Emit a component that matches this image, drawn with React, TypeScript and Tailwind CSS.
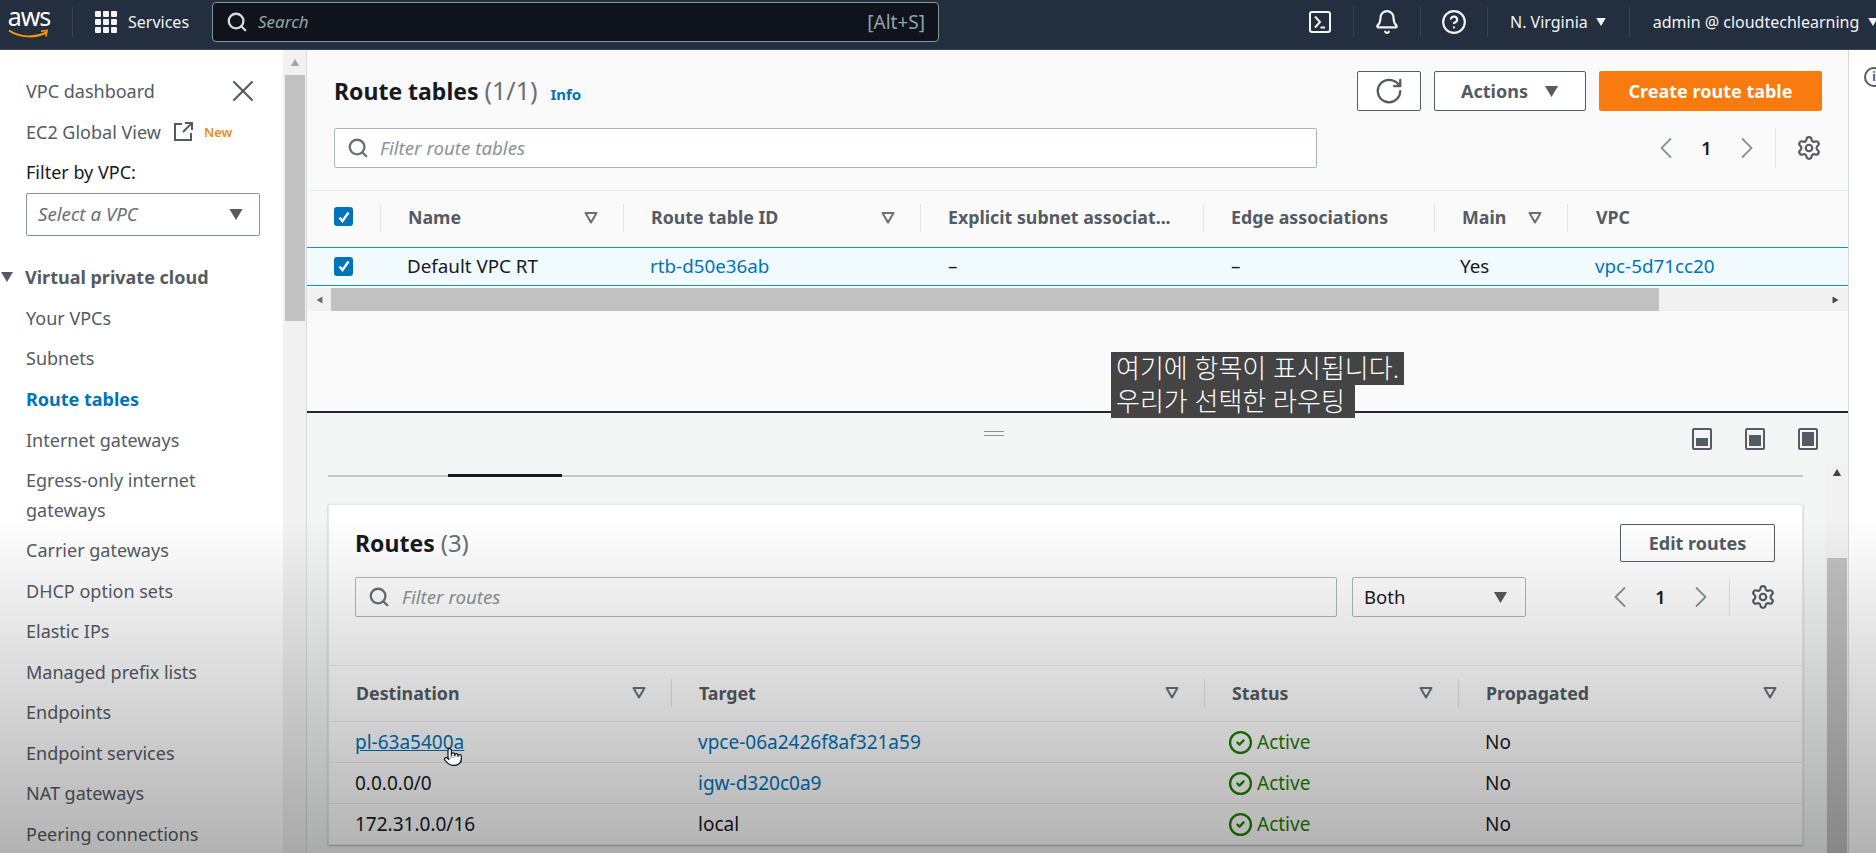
import {
  ChevronLeft,
  ChevronRight,
  Pointer,
  RotateCw,
  Search,
  Settings,
  X,
  Bell,
  CircleHelp,
  CircleCheck,
} from "lucide-react";

const navItems = [
  "Internet gateways",
  "Egress-only internet gateways",
  "Carrier gateways",
  "DHCP option sets",
  "Elastic IPs",
  "Managed prefix lists",
  "Endpoints",
  "Endpoint services",
  "NAT gateways",
  "Peering connections",
];

const routes = [
  { dest: "pl-63a5400a", destLink: true, target: "vpce-06a2426f8af321a59", targetLink: true },
  { dest: "0.0.0.0/0", destLink: false, target: "igw-d320c0a9", targetLink: true },
  { dest: "172.31.0.0/16", destLink: false, target: "local", targetLink: false },
];

const Caret = ({ className }: { className: string }) => (
  <svg viewBox="0 0 12 10" className={className} fill="currentColor">
    <path d="M0 0h12L6 10z" />
  </svg>
);

const SortIcon = () => (
  <svg viewBox="0 0 14 12" className="h-[12px] w-[14px] shrink-0 text-[#687078]" fill="none" stroke="currentColor" strokeWidth="2">
    <path d="M1.5 1h11L7 10.5z" strokeLinejoin="round" />
  </svg>
);

const HeadCell = ({ label, sort = true, first = false, pl = "pl-[27px]", pb = "pb-[3px]" }: { label: string; sort?: boolean; first?: boolean; pl?: string; pb?: string }) => (
  <div className={`flex items-center min-w-0 ${pb}`}>
    {!first && <div className="h-[28px] border-l border-[#e1e4e4]" />}
    <div className={`flex flex-1 items-center justify-between pr-[25px] text-[17.8px] font-bold text-[#545b64] ${pl}`}>
      <span className="truncate">{label}</span>
      {sort && <SortIcon />}
    </div>
  </div>
);

const Checkbox = () => (
  <div className="flex h-[19px] w-[19px] items-center justify-center rounded-[3px] bg-[#0073bb]">
    <svg viewBox="0 0 14 14" className="h-[14px] w-[14px]" fill="none" stroke="white" strokeWidth="2.4">
      <path d="M2.5 7.5l3 3.5 6-8.5" />
    </svg>
  </div>
);

const Pagination = ({ sepHeight }: { sepHeight: string }) => (
  <div className="flex items-center">
    <ChevronLeft size={36} strokeWidth={1.2} className="text-[#879596]" />
    <span className="w-[45px] text-center text-[18px] font-semibold text-[#16191f]">1</span>
    <ChevronRight size={36} strokeWidth={1.2} className="text-[#879596]" />
    <div className={`ml-[10px] border-l border-[#e1e4e4] ${sepHeight}`} />
    <Settings size={26} strokeWidth={2} className="ml-[20px] text-[#545b64]" />
  </div>
);

const FilterInput = ({ placeholder, width, gap }: { placeholder: string; width: string; gap: string }) => (
  <div className={`flex h-[40px] items-center rounded-[2px] border border-[#aab7b8] bg-white pl-[12px] ${width}`}>
    <Search size={22} strokeWidth={2.5} className="text-[#687078]" />
    <span className={`italic text-[18.7px] text-[#879596] ${gap}`}>{placeholder}</span>
  </div>
);

const SplitIcon = ({ fill }: { fill: string }) => (
  <div className="flex h-[22px] w-[20px] flex-col justify-end rounded-[2px] border-[2px] border-[#545b64] p-[2px]">
    <div className={`w-full bg-[#545b64] ${fill}`} />
  </div>
);

export default function App() {
  return (
    <div className="relative h-[853px] w-[1876px] overflow-hidden bg-white text-[18px] text-[#16191f] [font-family:'Noto_Sans','Noto_Sans_CJK_KR',sans-serif]">
      {/* top nav */}
      <header className="flex h-[50px] items-center border-b border-[#3c4655] bg-[#232f3e] pb-[5px] text-[16px] text-[#f2f3f3]">
        <div className="ml-[8px] flex w-[42px] shrink-0 flex-col items-center">
          <span className="h-[24px] text-[25px] leading-[22px] tracking-[-1px] text-white">aws</span>
          <svg viewBox="0 0 42 10" className="h-[10px] w-[42px]" fill="none">
            <path d="M1 1.5C12 9 28 9 38 3.5" stroke="#ff9900" strokeWidth="2" />
            <path d="M33 2.2l6-.7-1 6" stroke="#ff9900" strokeWidth="1.6" />
          </svg>
        </div>
        <div className="ml-[22px] h-[30px] border-l border-[#37424f]" />
        <div className="ml-[22px] grid shrink-0 grid-cols-[6px_6px_6px] gap-[2px]">
          {Array.from({ length: 9 }).map((_, i) => (
            <div key={i} className="h-[6px] w-[6px] rounded-[1px] bg-[#f2f3f3]" />
          ))}
        </div>
        <span className="ml-[11px] w-[84px] shrink-0">Services</span>
        <div className="flex h-[40px] w-[727px] shrink-0 items-center rounded-[4px] border border-[#879596] bg-[#0f141c] pl-[13px] pr-[13px]">
          <Search size={22} strokeWidth={2.5} className="text-[#d5dbdb]" />
          <span className="ml-[10px] flex-1 text-[17px] italic text-[#95a5a6]">Search</span>
          <span className="text-[19px] text-[#95a5a6]">[Alt+S]</span>
        </div>
        <div className="ml-[370px] h-[22px] w-[22px] shrink-0 rounded-[3px] border-[2px] border-[#f2f3f3]">
          <svg viewBox="0 0 18 18" className="h-[18px] w-[18px]" fill="none" stroke="#f2f3f3" strokeWidth="2">
            <path d="M4 3.5l5 5.5-5 5.5M9.5 14.5H14" />
          </svg>
        </div>
        <div className="ml-[22px] h-[30px] border-l border-[#37424f]" />
        <Bell size={26} strokeWidth={2} className="ml-[20px] shrink-0" />
        <div className="ml-[20px] h-[30px] border-l border-[#37424f]" />
        <CircleHelp size={26} strokeWidth={2} className="ml-[20px] shrink-0" />
        <div className="ml-[20px] h-[30px] border-l border-[#37424f]" />
        <span className="ml-[22px] whitespace-nowrap">N. Virginia</span>
        <Caret className="ml-[8px] h-[8px] w-[10px] shrink-0" />
        <div className="ml-[23px] h-[30px] border-l border-[#37424f]" />
        <span className="ml-[23px] whitespace-nowrap">admin @ cloudtechlearning</span>
        <Caret className="ml-[9px] h-[8px] w-[10px] shrink-0" />
      </header>

      <div className="flex h-[803px]">
        {/* side nav */}
        <aside className="w-[283px] shrink-0 pt-[21px] text-[#545b64]">
          <div className="flex h-[40px] items-center justify-between pl-[26px] pr-[22px]">
            <span>VPC dashboard</span>
            <X size={36} strokeWidth={1.4} className="text-[#545b64]" />
          </div>
          <div className="flex h-[42px] items-center pl-[26px]">
            <span>EC2 Global View</span>
            <svg viewBox="0 0 20 20" className="ml-[12px] h-[20px] w-[20px]" fill="none" stroke="#545b64" strokeWidth="2">
              <path d="M9 2H2v16h16v-7M12 1h7v7M19 1l-9 9" />
            </svg>
            <span className="ml-[11px] mt-[2px] text-[13px] font-semibold text-[#f08c1e]">New</span>
          </div>
          <div className="flex h-[39px] items-center pl-[26px] text-[#16191f]">Filter by VPC:</div>
          <div className="ml-[26px] mt-[1px] flex h-[43px] w-[234px] items-center justify-between rounded-[2px] border border-[#879596] pl-[11px] pr-[16px]">
            <span className="text-[18.7px] italic text-[#687078]">Select a VPC</span>
            <Caret className="h-[11px] w-[14px] text-[#545b64]" />
          </div>
          <div className="mt-[21px] flex h-[40px] items-center font-bold">
            <Caret className="ml-[1px] h-[10px] w-[12px]" />
            <span className="ml-[12px]">Virtual private cloud</span>
          </div>
          <div className="pl-[26px] pt-[1px]">
            <div className="flex h-[40px] items-center">Your VPCs</div>
            <div className="flex h-[41px] items-center">Subnets</div>
            <div className="flex h-[41px] items-center font-bold text-[#0073bb]">Route tables</div>
            {navItems.map((item) =>
              item.startsWith("Egress") ? (
                <div key={item} className="flex h-[70px] w-[220px] items-center pb-[2px] leading-[30px]">
                  {item}
                </div>
              ) : (
                <div key={item} className="flex h-[40.5px] items-center whitespace-nowrap">
                  {item}
                </div>
              )
            )}
          </div>
        </aside>

        {/* side nav scrollbar */}
        <div className="flex w-[24px] shrink-0 flex-col items-center border-r border-[#d5dbdb] bg-[#f1f1f1]">
          <Caret className="mt-[9px] h-[7px] w-[10px] rotate-180 text-[#a3a3a3]" />
          <div className="mt-[9px] h-[246px] w-[20px] bg-[#c1c1c1]" />
        </div>

        {/* main column */}
        <main className="flex w-[1542px] shrink-0 flex-col border-r border-[#d5dbdb] bg-[#fafafa]">
          {/* route tables */}
          <section className="h-[363px] shrink-0 border-b-2 border-[#24292e]">
            <div className="mt-[21px] flex h-[40px] items-center justify-between pl-[27px] pr-[26px]">
              <div className="flex items-baseline">
                <span className="text-[23px] font-bold">Route tables</span>
                <span className="ml-[6px] text-[25px] text-[#687078]">(1/1)</span>
                <span className="ml-[13px] text-[15px] font-bold text-[#0073bb]">Info</span>
              </div>
              <div className="flex items-center gap-[13px]">
                <div className="flex h-[40px] w-[64px] items-center justify-center rounded-[2px] border border-[#545b64] bg-white">
                  <RotateCw size={30} strokeWidth={1.8} className="text-[#545b64]" />
                </div>
                <div className="flex h-[40px] w-[152px] items-center justify-center gap-[16px] rounded-[2px] border border-[#545b64] bg-white font-bold text-[#545b64]">
                  Actions
                  <Caret className="h-[11px] w-[15px]" />
                </div>
                <div className="flex h-[40px] w-[223px] items-center justify-center rounded-[2px] bg-[#f97a0e] font-bold text-white">
                  Create route table
                </div>
              </div>
            </div>
            <div className="mt-[17px] flex h-[40px] items-center justify-between pl-[27px] pr-[26px]">
              <FilterInput placeholder="Filter route tables" width="w-[983px]" gap="ml-[11px]" />
              <Pagination sepHeight="h-[40px]" />
            </div>
            <div className="mt-[22px] grid h-[57px] grid-cols-[73px_243px_297px_283px_231px_133px_1fr] border-t border-[#eaeded]">
              <div className="flex items-center pb-[5px] pl-[27px]">
                <Checkbox />
              </div>
              <HeadCell label="Name" />
              <HeadCell label="Route table ID" />
              <HeadCell label="Explicit subnet associat..." sort={false} />
              <HeadCell label="Edge associations" sort={false} />
              <HeadCell label="Main" />
              <HeadCell label="VPC" sort={false} pl="pl-[28px]" />
            </div>
            <div className="grid h-[39px] grid-cols-[73px_243px_297px_283px_231px_134px_1fr] items-center border-y border-[#0e9db8] bg-[#f1faff] pb-[1px] text-[18.8px]">
              <div className="pl-[27px]">
                <Checkbox />
              </div>
              <span className="pl-[27px]">Default VPC RT</span>
              <span className="pl-[27px] text-[#0073bb]">rtb-d50e36ab</span>
              <span className="pl-[28px]">–</span>
              <span className="pl-[28px]">–</span>
              <span className="pl-[26px]">Yes</span>
              <span className="pl-[27px] text-[#0073bb]">vpc-5d71cc20</span>
            </div>
            <div className="mt-[2px] flex h-[23px] items-center bg-[#f1f1f1] pl-[9px] pr-[9px]">
              <Caret className="h-[10px] w-[7px] rotate-90 text-[#6b6b6b]" />
              <div className="ml-[8px] h-[23px] w-[1328px] bg-[#c1c1c1]" />
              <div className="flex-1" />
              <Caret className="h-[10px] w-[7px] -rotate-90 text-[#444]" />
            </div>
          </section>

          {/* split panel */}
          <section className="flex min-h-0 flex-1 flex-col bg-[#f4f5f5]">
            <div className="relative flex h-[51px] shrink-0 items-center justify-end gap-[33px] pr-[30px]">
              <div className="absolute left-[677px] top-[18px] flex w-[20px] flex-col gap-[3px]">
                <div className="border-t border-[#879596]" />
                <div className="border-t border-[#879596]" />
              </div>
              <SplitIcon fill="h-[8px]" />
              <SplitIcon fill="h-[11px]" />
              <SplitIcon fill="h-full" />
            </div>
            <div className="flex min-h-0 flex-1">
              <div className="w-[1518px] shrink-0 pl-[21px] pr-[22px]">
                <div className="mt-[11px] h-[2px] bg-[#c4c8c8]">
                  <div className="ml-[120px] h-[3px] w-[114px] -translate-y-[1px] bg-[#16191f]" />
                </div>
                <div className="mt-[27px] border border-[#e6e8e8] bg-white shadow-[0_1px_2px_rgba(0,0,0,0.25)]">
                  <div className="flex h-[57px] items-end justify-between pl-[26px] pr-[27px]">
                    <div className="flex items-baseline self-center pt-[19px]">
                      <span className="text-[23px] font-bold">Routes</span>
                      <span className="ml-[6px] text-[24px] text-[#687078]">(3)</span>
                    </div>
                    <div className="flex h-[38px] w-[155px] items-center justify-center rounded-[2px] border border-[#545b64] bg-white font-bold text-[#545b64]">
                      Edit routes
                    </div>
                  </div>
                  <div className="mt-[15px] flex h-[40px] items-center pl-[26px] pr-[26px]">
                    <FilterInput placeholder="Filter routes" width="w-[982px]" gap="ml-[12px]" />
                    <div className="ml-[15px] flex h-[40px] w-[174px] items-center justify-between rounded-[2px] border border-[#aab7b8] bg-white pl-[11px] pr-[17px]">
                      <span className="text-[18.5px]">Both</span>
                      <Caret className="h-[11px] w-[15px] text-[#545b64]" />
                    </div>
                    <div className="ml-auto">
                      <Pagination sepHeight="h-[38px]" />
                    </div>
                  </div>
                  <div className="mt-[48px] grid h-[56px] grid-cols-[342px_533px_254px_1fr] border-t border-[#eaeded]">
                    <HeadCell label="Destination" first pb="pb-[1px]" />
                    <HeadCell label="Target" pb="pb-[1px]" />
                    <HeadCell label="Status" pb="pb-[1px]" />
                    <HeadCell label="Propagated" pb="pb-[1px]" />
                  </div>
                  {routes.map((r) => (
                    <div key={r.dest} className="grid h-[41px] grid-cols-[342px_533px_254px_1fr] items-center border-t border-[#eaeded] text-[19px]">
                      <span className={`pl-[26px] ${r.destLink ? "text-[#0073bb] underline" : ""}`}>{r.dest}</span>
                      <span className={`pl-[27px] ${r.targetLink ? "text-[#0073bb]" : ""}`}>{r.target}</span>
                      <span className="flex items-center pl-[24px] text-[#1d8102]">
                        <CircleCheck size={25} strokeWidth={2.2} />
                        <span className="ml-[4px]">Active</span>
                      </span>
                      <span className="pl-[27px]">No</span>
                    </div>
                  ))}
                </div>
              </div>
              <div className="flex w-[23px] shrink-0 flex-col items-center bg-[#f1f1f1]">
                <Caret className="mt-[5px] h-[7px] w-[10px] rotate-180 text-[#444]" />
                <div className="mt-[82px] w-[20px] flex-1 bg-[#c1c1c1]" />
              </div>
            </div>
          </section>
        </main>

        {/* tools rail, info icon is cut by the page edge */}
        <div className="min-w-0 flex-1 overflow-hidden pl-[15px] pt-[17px]">
          <div className="flex h-[20px] w-[20px] items-center justify-center rounded-full border-[2px] border-[#545b64] text-[12px] font-bold text-[#545b64]">
            i
          </div>
        </div>
      </div>

      {/* video player shade along the bottom */}
      <div className="pointer-events-none absolute inset-x-0 bottom-0 h-[335px] bg-gradient-to-b from-transparent to-black/30" />

      {/* video captions */}
      <div className="absolute left-[1111px] top-[352px] text-[26px] font-light leading-[33px] text-white">
        <div className="w-fit bg-[#444444] px-[5px]">여기에 항목이 표시됩니다.</div>
        <div className="w-fit bg-[#444444] pl-[5px] pr-[10px]">우리가 선택한 라우팅</div>
      </div>

      {/* mouse pointer */}
      <Pointer size={20} strokeWidth={1.5} className="absolute left-[443px] top-[747px] fill-white text-[#16191f]" />
    </div>
  );
}
